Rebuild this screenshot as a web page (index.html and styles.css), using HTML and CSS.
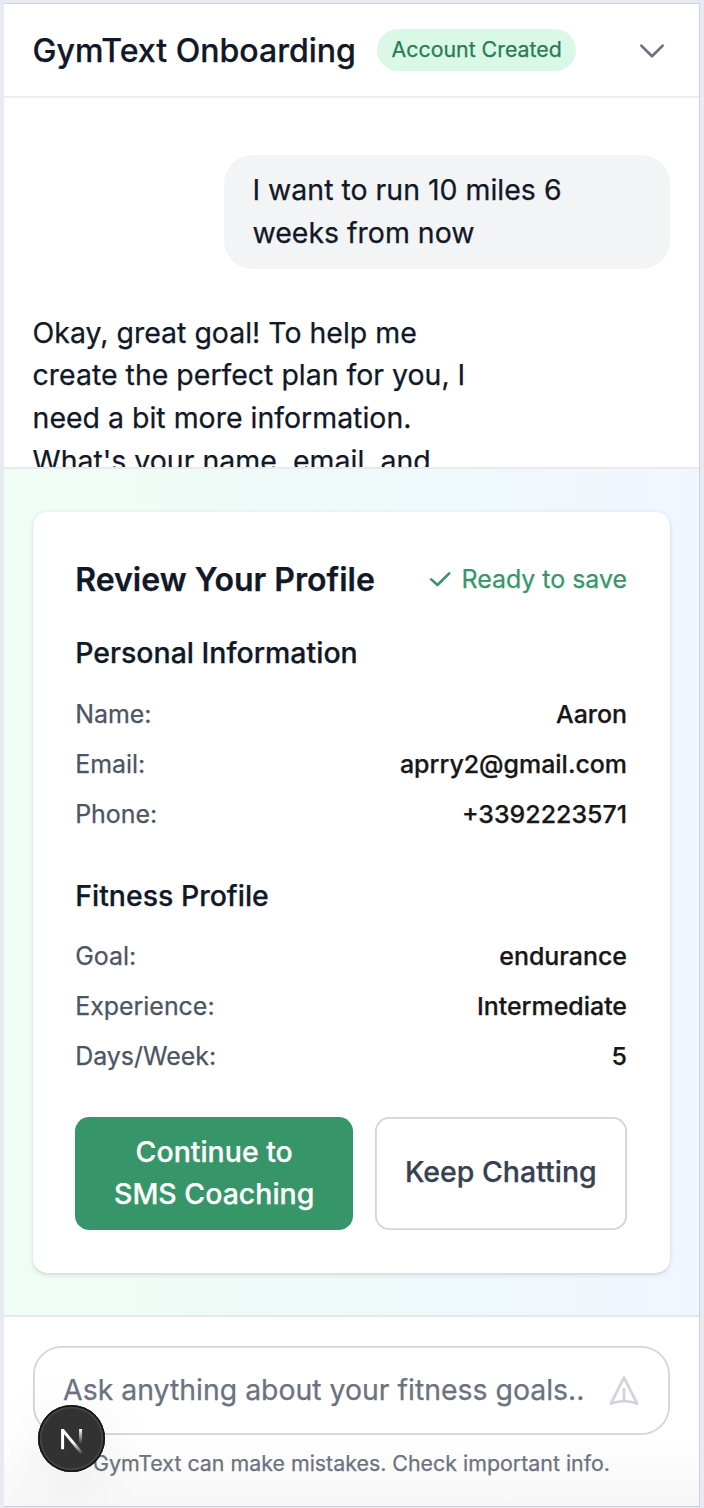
FILE: index.html
```
<!DOCTYPE html>
<html lang="en">
<head>
<meta charset="utf-8">
<title>GymText Onboarding</title>
<link rel="stylesheet" href="styles.css">
</head>
<body>
<main class="app">
  <header class="header">
    <h1 class="title">GymText Onboarding</h1>
    <span class="badge">Account Created</span>
    <svg class="chevron" viewBox="0 0 26 16" fill="none" stroke="#6b7280" stroke-width="2.7" stroke-linecap="round" stroke-linejoin="round"><path d="M2.3 2.6 13 13.2 23.7 2.6"/></svg>
  </header>
  <section class="chat">
    <div class="bubble">I want to run 10 miles 6<br>weeks from now</div>
    <p class="reply">Okay, great goal! To help me<br>create the perfect plan for you, I<br>need a bit more information.<br>What's your name, email, and</p>
  </section>
  <section class="review">
    <div class="card">
      <div class="card-head">
        <h2 class="card-title">Review Your Profile</h2>
        <span class="ready"><svg class="check" viewBox="0 0 22 18" fill="none" stroke="#36966a" stroke-width="2.6" stroke-linecap="round" stroke-linejoin="round"><path d="M2.2 8.4 8.4 14 20.2 2.4"/></svg>Ready to save</span>
      </div>
      <h3 class="group-title">Personal Information</h3>
      <dl class="rows">
        <div class="row"><dt>Name:</dt><dd>Aaron</dd></div>
        <div class="row"><dt>Email:</dt><dd>aprry2@gmail.com</dd></div>
        <div class="row"><dt>Phone:</dt><dd>+3392223571</dd></div>
      </dl>
      <h3 class="group-title">Fitness Profile</h3>
      <dl class="rows">
        <div class="row"><dt>Goal:</dt><dd>endurance</dd></div>
        <div class="row"><dt>Experience:</dt><dd>Intermediate</dd></div>
        <div class="row"><dt>Days/Week:</dt><dd>5</dd></div>
      </dl>
      <div class="actions">
        <button class="btn primary">Continue to<br>SMS Coaching</button>
        <button class="btn secondary">Keep Chatting</button>
      </div>
    </div>
  </section>
  <footer class="composer">
    <div class="field">
      <span class="placeholder">Ask anything about your fitness goals..</span>
      <svg class="send" viewBox="0 0 30 30" fill="none" stroke="#d1d5db" stroke-width="2.9" stroke-linecap="round" stroke-linejoin="round"><path d="M15 1.6 1.9 27.6Q15 22.6 28.1 27.6L15 1.6ZM15 25V13.5"/></svg>
    </div>
    <p class="note">GymText can make mistakes. Check important info.</p>
  </footer>
  <div class="dev-badge">
    <svg class="dev-mark" viewBox="0 0 24 26" fill="none" stroke-width="3">
      <defs>
        <linearGradient id="diag" gradientUnits="userSpaceOnUse" x1="13" y1="14" x2="22" y2="25"><stop stop-color="#fff"/><stop offset="1" stop-color="#fff" stop-opacity="0.1"/></linearGradient>
        <linearGradient id="stem" gradientUnits="userSpaceOnUse" x1="0" y1="1" x2="0" y2="16"><stop stop-color="#fff"/><stop offset="1" stop-color="#fff" stop-opacity="0"/></linearGradient>
      </defs>
      <path stroke="#fff" d="M2.6 21.2V1"/>
      <path stroke="url(#diag)" d="M2.3 1.6 21.6 25"/>
      <path stroke="url(#stem)" d="M20.6 1V16"/>
    </svg>
  </div>
</main>
</body>
</html>
```
FILE: styles.css
```
* { box-sizing: border-box; margin: 0; }
body {
  height: 1508px;
  padding: 3px 4px 1px;
  overflow: hidden;
  background: #e8eaf2;
  color: #111827;
  font: 400 28.47px/42.7px Inter, "Liberation Sans", sans-serif;
  -webkit-text-stroke: 0.25px currentColor;
}
.app {
  position: relative;
  display: flex;
  flex-direction: column;
  width: 696px;
  height: 1504px;
  overflow: hidden;
  background: #fff;
  border-top: 1px solid #d1d3db;
  border-right: 1px solid #d1d3db;
  border-bottom: 1px solid #cdced3;
}
.header {
  display: flex;
  align-items: center;
  flex: none;
  height: 94px;
  padding: 0 34px 0 28.6px;
  border-bottom: 2px solid #ececf0;
}
.title { padding-top: 1px; font-size: 32.05px; line-height: 50px; font-weight: 500; white-space: nowrap; }
.badge {
  margin-left: 21.4px;
  padding: 6px 14.2px 8px;
  border-radius: 22px;
  background: #d9f8e6;
  color: #2b7a57;
  font-size: 21.33px;
  line-height: 28.57px;
  white-space: nowrap;
}
.chevron { width: 26px; height: 16px; margin: 1px 0 0 auto; }
.chat {
  display: flex;
  flex-direction: column;
  gap: 43px;
  flex: none;
  height: 369px;
  padding: 57px 28.6px 0;
  overflow: hidden;
}
.bubble {
  align-self: flex-end;
  flex: none;
  width: 446px;
  height: 113.5px;
  padding: 14.3px 28px;
  border-radius: 28.6px;
  background: #f3f4f6;
}
.reply { line-height: 42.75px; white-space: nowrap; }
.review {
  flex: none;
  height: 850px;
  padding: 43px 28.6px 0;
  border-top: 2px solid #e9eaee;
  border-bottom: 2px solid #e5e7eb;
  background: linear-gradient(90deg, #f0fdf4, #eff6ff);
}
.card {
  height: 761px;
  padding: 43px 43.4px 43px 42.6px;
  border-radius: 14.3px;
  background: #fff;
  box-shadow: 0 1.8px 5.4px rgba(0, 0, 0, .1), 0 1.8px 3.6px -1.8px rgba(0, 0, 0, .1);
}
.card-head { display: flex; align-items: center; justify-content: space-between; height: 50px; margin-bottom: 26.5px; }
.card-title { font-size: 32.05px; line-height: 50px; font-weight: 600; white-space: nowrap; }
.ready { display: flex; align-items: center; gap: 10.5px; color: #36966a; font-size: 24.93px; line-height: 35.7px; white-space: nowrap; }
.check { width: 22px; height: 18px; }
.group-title { margin-bottom: 22px; font-size: 28.47px; line-height: 42.86px; font-weight: 500; }
.rows { display: flex; flex-direction: column; gap: 14.3px; padding-top: 0.6px; margin-bottom: 42.2px; }
.rows + .group-title { margin-bottom: 21px; }
.row { display: flex; justify-content: space-between; font-size: 24.93px; line-height: 35.7px; }
.row dt { color: #4b5563; }
.row dd { color: #171717; font-weight: 500; }
.actions { display: flex; gap: 21.4px; height: 113.5px; margin-top: -0.6px; }
.btn { padding: 0; border: 0; border-radius: 14.3px; font: inherit; font-weight: 500; }
.primary { width: 278px; background: #36966a; color: #fff; }
.secondary { flex: 1; padding-bottom: 1px; background: #fff; color: #374151; box-shadow: inset 0 0 0 1.8px #d1d5db; }
.composer {
  flex: 1;
  padding: 28.6px 28.6px 0;
  background: linear-gradient(#fff 120px, #f7f7f7);
}
.field {
  display: flex;
  align-items: center;
  justify-content: space-between;
  height: 89px;
  padding: 0 31.5px 0 30.5px;
  border-radius: 28.6px;
  background: #fff;
  box-shadow: inset 0 0 0 1.8px #d1d5db;
}
.placeholder { color: #6b7280; font-size: 28.42px; white-space: nowrap; }
.send { width: 30px; height: 30px; margin-top: 2px; }
.note { margin-top: 14px; color: #6b7280; font-size: 21.38px; line-height: 28.57px; text-align: center; white-space: nowrap; }
.dev-badge {
  position: absolute;
  left: 34px;
  bottom: 34px;
  display: flex;
  align-items: center;
  justify-content: center;
  width: 67px;
  height: 67px;
  border-radius: 50%;
  background: #323232;
  box-shadow: inset 0 0 0 1.7px #161616, inset 0 0 0 3.5px #454545, 0 12px 60px rgba(0, 0, 0, .08);
}
.dev-mark { width: 24px; height: 26px; margin-top: 4px; }
```
